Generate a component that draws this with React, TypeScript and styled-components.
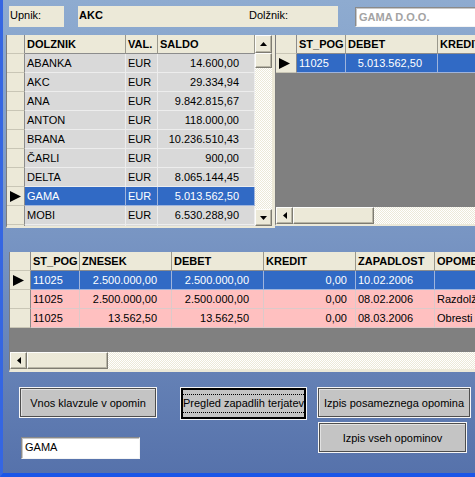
import React from 'react';
import styled, { createGlobalStyle } from 'styled-components';

const GlobalStyle = createGlobalStyle`
  html, body {
    margin: 0;
    padding: 0;
  }
  body {
    font-family: "Liberation Sans", Arial, sans-serif;
    font-size: 11px;
    color: #000;
  }
`;

type Tone = 'grey' | 'pink' | 'selected';

interface Column {
    title: string;
    width: number;
    right?: boolean;
    pad?: number;
}

const BEIGE = '#ece9d8';

const toneBg: Record<Tone, string> = {
    grey: '#d9d9d9',
    pink: '#ffc0c0',
    selected: '#316ac5',
};

const toneLine: Record<Tone, string> = {
    grey: '#ededed',
    pink: '#dccaca',
    selected: '#9fb4dc',
};

const Form = styled.div`
    width: 475px;
    height: 477px;
    box-sizing: border-box;
    overflow: hidden;
    display: flex;
    flex-direction: column;
    background: linear-gradient(#8eabd0 0%, #7895c3 50%, #5672ab 100%);
    border-left: 3px solid #3566e2;
    border-bottom: 4px solid #1a56e8;
`;

const TopBar = styled.div`
    display: flex;
    align-items: flex-start;
    height: 21px;
    margin: 6px 0 0 6px;
`;

const LabelBox = styled.div<{ $w: number; $bold?: boolean; $ml?: number; $pl?: number }>`
    flex: none;
    width: ${(p) => p.$w}px;
    height: 21px;
    box-sizing: border-box;
    margin-left: ${(p) => p.$ml ?? 0}px;
    padding: 3px 0 0 ${(p) => p.$pl ?? 1}px;
    line-height: 13px;
    background: ${BEIGE};
    font-weight: ${(p) => (p.$bold ? 'bold' : 'normal')};
    white-space: nowrap;
`;

const TextField = styled.div<{ $w: number; $h: number; $muted?: boolean }>`
    flex: none;
    width: ${(p) => p.$w}px;
    height: ${(p) => p.$h}px;
    box-sizing: border-box;
    padding: 3px 0 0 3px;
    line-height: 13px;
    background: #fff;
    border: 1px solid;
    border-color: #8a8a8a #f4f4f4 #f4f4f4 #8a8a8a;
    box-shadow: inset 1px 1px #c8c8c8;
    color: ${(p) => (p.$muted ? '#a3a3a3' : '#000')};
    font-weight: ${(p) => (p.$muted ? 'bold' : 'normal')};
    white-space: nowrap;
    overflow: hidden;
`;

const GridsRow = styled.div`
    display: flex;
    align-items: flex-start;
    margin: 8px 0 0 3px;
`;

const Frame = styled.div<{ $w: number; $h: number; $row?: boolean; $bb: number; $br?: number }>`
    flex: none;
    width: ${(p) => p.$w}px;
    height: ${(p) => p.$h}px;
    box-sizing: border-box;
    display: flex;
    flex-direction: ${(p) => (p.$row ? 'row' : 'column')};
    overflow: hidden;
    background: ${BEIGE};
    border-left: 1px solid #7c7c7c;
    border-right: ${(p) => p.$br ?? 0}px solid ${BEIGE};
    border-bottom: ${(p) => p.$bb}px solid ${BEIGE};
`;

const Body = styled.div<{ $fill: string }>`
    flex: 1;
    min-width: 0;
    min-height: 0;
    overflow: hidden;
    background: ${(p) => p.$fill};
`;

const Row = styled.div`
    display: flex;
    flex: none;
    height: 19px;
`;

const IndicatorCell = styled.div<{ $w: number }>`
    flex: none;
    width: ${(p) => p.$w}px;
    height: 19px;
    box-sizing: border-box;
    display: flex;
    align-items: center;
    padding-left: 3px;
    background: ${BEIGE};
    border-right: 1px solid #8c8c8c;
    border-bottom: 1px solid #c9c6b6;
`;

const HeaderCell = styled.div<{ $w: number }>`
    flex: none;
    width: ${(p) => p.$w}px;
    height: 19px;
    box-sizing: border-box;
    padding-left: 2px;
    line-height: 18px;
    background: ${BEIGE};
    font-weight: bold;
    white-space: nowrap;
    overflow: hidden;
    border-right: 1px solid #9a988c;
    border-bottom: 1px solid #8c8c8c;
`;

const DataCell = styled.div<{ $w: number; $right?: boolean; $pad?: number; $tone: Tone }>`
    flex: none;
    width: ${(p) => p.$w}px;
    height: 19px;
    box-sizing: border-box;
    padding: ${(p) => (p.$right ? `0 ${p.$pad ?? 14}px 0 0` : '0 0 0 2px')};
    line-height: 18px;
    text-align: ${(p) => (p.$right ? 'right' : 'left')};
    white-space: nowrap;
    overflow: hidden;
    background: ${(p) => toneBg[p.$tone]};
    color: ${(p) => (p.$tone === 'selected' ? '#fff' : '#000')};
    border-right: 1px solid ${(p) => toneLine[p.$tone]};
    border-bottom: 1px solid ${(p) => toneLine[p.$tone]};
`;

const ScrollButton = styled.div<{ $w?: number; $h?: number }>`
    flex: none;
    width: ${(p) => (p.$w ? `${p.$w}px` : 'auto')};
    height: ${(p) => (p.$h ? `${p.$h}px` : 'auto')};
    box-sizing: border-box;
    display: flex;
    align-items: center;
    justify-content: center;
    background: ${BEIGE};
    border: 1px solid;
    border-color: #fdfdfb #7e7c72 #7e7c72 #fdfdfb;
    box-shadow: inset -1px -1px #b9b6a6;
`;

const Track = styled.div`
    flex: 1;
    background-color: #f6f5f0;
    background-image: repeating-conic-gradient(${BEIGE} 0 25%, #ffffff 0 50%);
    background-size: 2px 2px;
`;

const VScroll = styled.div`
    flex: none;
    width: 17px;
    display: flex;
    flex-direction: column;
`;

const HScroll = styled.div`
    flex: none;
    height: 17px;
    display: flex;
    flex-direction: row;
`;

const Actions = styled.div`
    display: flex;
    align-items: flex-start;
    margin-top: 15px;
`;

const ActionColumn = styled.div<{ $ml: number; $w: number }>`
    flex: none;
    display: flex;
    flex-direction: column;
    align-items: flex-start;
    margin-left: ${(p) => p.$ml}px;
    width: ${(p) => p.$w}px;
`;

const Button = styled.div<{ $w: number; $h: number; $focused?: boolean; $mt?: number; $ml?: number }>`
    flex: none;
    width: ${(p) => p.$w}px;
    height: ${(p) => p.$h}px;
    box-sizing: border-box;
    margin: ${(p) => p.$mt ?? 0}px 0 0 ${(p) => p.$ml ?? 0}px;
    display: flex;
    align-items: center;
    justify-content: center;
    background: #c4c4c4;
    border: 1px solid #f6f6f6;
    box-shadow: ${(p) =>
        p.$focused ? 'inset 0 0 0 2px #000' : 'inset 0 0 0 1px #4e4e4e, inset 2px 2px #e2e2e2'};
    font-size: 11px;
    white-space: nowrap;
`;

const FocusRect = styled.span`
    padding: 2px 1px;
    line-height: 13px;
    border: 1px dotted #000;
`;

const Pointer: React.FC = () => (
    <svg width={11} height={11} viewBox="0 0 11 11">
        <polygon points="0,0 11,5.5 0,11" fill="#000" />
    </svg>
);

const Arrow: React.FC<{ dir: 'up' | 'down' | 'left' }> = ({ dir }) => {
    const w = dir === 'left' ? 4 : 7;
    const h = dir === 'left' ? 7 : 4;
    const pts = dir === 'up' ? '0,4 3.5,0 7,4' : dir === 'down' ? '0,0 7,0 3.5,4' : '4,0 4,7 0,3.5';
    return (
        <svg width={w} height={h} viewBox={`0 0 ${w} ${h}`}>
            <polygon points={pts} fill="#000" />
        </svg>
    );
};

interface GridProps {
    columns: Column[];
    rows: string[][];
    selected: number;
    tone: 'grey' | 'pink';
    indicator: number;
}

const GridRows: React.FC<GridProps> = ({ columns, rows, selected, tone, indicator }) => (
    <>
        <Row>
            <IndicatorCell $w={indicator} />
            {columns.map((c) => (
                <HeaderCell key={c.title} $w={c.width}>
                    {c.title}
                </HeaderCell>
            ))}
        </Row>
        {rows.map((r, i) => {
            const t: Tone = i === selected ? 'selected' : tone;
            return (
                <Row key={i}>
                    <IndicatorCell $w={indicator}>{i === selected && <Pointer />}</IndicatorCell>
                    {columns.map((c, j) => (
                        <DataCell key={c.title} $w={c.width} $right={c.right} $pad={c.pad} $tone={t}>
                            {r[j]}
                        </DataCell>
                    ))}
                </Row>
            );
        })}
    </>
);

const HorizontalBar: React.FC = () => (
    <HScroll>
        <ScrollButton $w={17}>
            <Arrow dir="left" />
        </ScrollButton>
        <ScrollButton $w={81} />
        <Track />
    </HScroll>
);

const debtorColumns: Column[] = [
    { title: 'DOLZNIK', width: 101 },
    { title: 'VAL.', width: 32 },
    { title: 'SALDO', width: 97, right: true, pad: 15 },
];

const debtors: string[][] = [
    ['ABANKA', 'EUR', '14.600,00'],
    ['AKC', 'EUR', '29.334,94'],
    ['ANA', 'EUR', '9.842.815,67'],
    ['ANTON', 'EUR', '118.000,00'],
    ['BRANA', 'EUR', '10.236.510,43'],
    ['ČARLI', 'EUR', '900,00'],
    ['DELTA', 'EUR', '8.065.144,45'],
    ['GAMA', 'EUR', '5.013.562,50'],
    ['MOBI', 'EUR', '6.530.288,90'],
    ['', '', ''],
];

const contractColumns: Column[] = [
    { title: 'ST_POG', width: 49 },
    { title: 'DEBET', width: 92, right: true, pad: 15 },
    { title: 'KREDIT', width: 92, right: true, pad: 8 },
];

const contracts: string[][] = [['11025', '5.013.562,50', '']];

const claimColumns: Column[] = [
    { title: 'ST_POG', width: 49 },
    { title: 'ZNESEK', width: 92, right: true, pad: 14 },
    { title: 'DEBET', width: 92, right: true, pad: 14 },
    { title: 'KREDIT', width: 92, right: true, pad: 8 },
    { title: 'ZAPADLOST', width: 79 },
    { title: 'OPOMBE', width: 100 },
];

const claims: string[][] = [
    ['11025', '2.500.000,00', '2.500.000,00', '0,00', '10.02.2006', ''],
    ['11025', '2.500.000,00', '2.500.000,00', '0,00', '08.02.2006', 'Razdolžnica'],
    ['11025', '13.562,50', '13.562,50', '0,00', '08.03.2006', 'Obresti'],
];

export default function App() {
    return (
        <>
            <GlobalStyle />
            <Form>
                <TopBar>
                    <LabelBox $w={55}>Upnik:</LabelBox>
                    <LabelBox $w={162} $ml={14} $bold>
                        AKC
                    </LabelBox>
                    <LabelBox $w={98} $pl={9}>
                        Dolžnik:
                    </LabelBox>
                    <TextField $w={125} $h={20} $muted style={{ marginLeft: 17, marginTop: 1 }}>
                        GAMA D.O.O.
                    </TextField>
                </TopBar>

                <GridsRow>
                    <Frame $w={269} $h={193} $row $bb={2} $br={3}>
                        <Body $fill="#d9d9d9">
                            <GridRows columns={debtorColumns} rows={debtors} selected={7} tone="grey" indicator={18} />
                        </Body>
                        <VScroll>
                            <ScrollButton $h={18}>
                                <Arrow dir="up" />
                            </ScrollButton>
                            <ScrollButton $h={15} />
                            <Track />
                            <ScrollButton $h={17}>
                                <Arrow dir="down" />
                            </ScrollButton>
                        </VScroll>
                    </Frame>
                    <Frame $w={200} $h={191} $bb={2}>
                        <Body $fill="#808080">
                            <GridRows columns={contractColumns} rows={contracts} selected={0} tone="grey" indicator={21} />
                        </Body>
                        <HorizontalBar />
                    </Frame>
                </GridsRow>

                <Frame $w={466} $h={120} $bb={3} style={{ margin: '24px 0 0 6px' }}>
                    <Body $fill="#808080">
                        <GridRows columns={claimColumns} rows={claims} selected={0} tone="pink" indicator={21} />
                    </Body>
                    <HorizontalBar />
                </Frame>

                <Actions>
                    <ActionColumn $ml={16} $w={138}>
                        <Button $w={138} $h={31}>
                            Vnos klavzule v opomin
                        </Button>
                        <TextField $w={119} $h={22} style={{ margin: '19px 0 0 2px' }}>
                            GAMA
                        </TextField>
                    </ActionColumn>
                    <ActionColumn $ml={23} $w={127}>
                        <Button $w={127} $h={33} $focused>
                            <FocusRect>Pregled zapadlih terjatev</FocusRect>
                        </Button>
                    </ActionColumn>
                    <ActionColumn $ml={10} $w={154}>
                        <Button $w={154} $h={31}>
                            Izpis posameznega opomina
                        </Button>
                        <Button $w={149} $h={31} $mt={4} $ml={1}>
                            Izpis vseh opominov
                        </Button>
                    </ActionColumn>
                </Actions>
            </Form>
        </>
    );
}
